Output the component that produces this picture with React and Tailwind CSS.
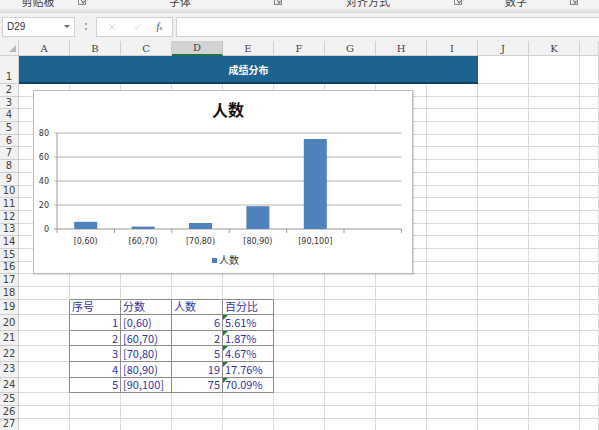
import React from 'react';
import { X, Check } from 'lucide-react';

const COLS = ['A', 'B', 'C', 'D', 'E', 'F', 'G', 'H', 'I', 'J', 'K', 'L'];
const data = [
    ['[0,60)', 6, '5.61%'],
    ['[60,70)', 2, '1.87%'],
    ['[70,80)', 5, '4.67%'],
    ['[80,90)', 19, '17.76%'],
    ['[90,100]', 75, '70.09%'],
];

const rowHeight = (r) => {
    if (r === 1) return 'h-[28px]';
    if (r >= 19 && r <= 24) return 'h-[15.6px]';
    return 'h-[12.7px]';
};

const Launcher = () => (
    <svg width="8" height="8" viewBox="0 0 8 8" className="mt-[-1px]">
        <rect x="0.5" y="0.5" width="7" height="7" fill="none" stroke="#8a8a8a" />
        <path d="M2 2 L6 6 M6 3.5 V6 H3.5" fill="none" stroke="#6a6a6a" />
    </svg>
);

const Chart = () => {
    const x0 = 23, step = 57.4, y0 = 138, k = 1.2;
    return (
        <div className="absolute left-[33px] top-[49px] w-[380px] h-[184px] bg-white border border-[#bcbcbc] shadow-[1px_1px_1px_rgba(0,0,0,0.12)]">
            <svg width="378" height="182" className="block">
                <text x="194" y="25" textAnchor="middle" fontSize="16" fontWeight="bold" fill="#111" fontFamily="'Noto Sans CJK SC', sans-serif">人数</text>
                {[0, 20, 40, 60, 80].map((v) => (
                    <g key={v}>
                        <line x1={x0 - 3} x2={x0 + step * 6} y1={y0 - v * k} y2={y0 - v * k} stroke={v === 0 ? '#9a9a9a' : '#b4b4b4'} strokeWidth="1.2" />
                        <text x={x0 - 8} y={y0 - v * k + 3} textAnchor="end" fontSize="8" fill="#333" fontFamily="'DejaVu Sans', sans-serif">{v}</text>
                    </g>
                ))}
                <line x1={x0} x2={x0} y1={y0 - 96} y2={y0} stroke="#9a9a9a" />
                {[0, 1, 2, 3, 4, 5, 6].map((i) => (
                    <line key={i} x1={x0 + step * i} x2={x0 + step * i} y1={y0} y2={y0 + 4} stroke="#9a9a9a" />
                ))}
                {data.map(([label, v], i) => {
                    const cx = x0 + step * (i + 0.5);
                    return (
                        <g key={label}>
                            <rect x={cx - 11.5} y={y0 - v * k} width="23" height={v * k} fill="#4f81bd" />
                            <text x={cx} y={y0 + 15} textAnchor="middle" fontSize="8" fill="#333" fontFamily="'DejaVu Sans', sans-serif">{label}</text>
                        </g>
                    );
                })}
                <rect x="178" y="167" width="5" height="5" fill="#4f81bd" />
                <text x="185" y="173" fontSize="10" fill="#333" fontFamily="'Noto Sans CJK SC', sans-serif">人数</text>
            </svg>
        </div>
    );
};

const cellContent = (r, c) => {
    if (r === 19) {
        const heads = { 1: '序号', 2: '分数', 3: '人数', 4: '百分比' };
        if (heads[c]) return <span className="pl-[2px]">{heads[c]}</span>;
    }
    if (r >= 20 && r <= 24) {
        const row = data[r - 20];
        if (c === 1) return <span className="ml-auto pr-[2px]">{r - 19}</span>;
        if (c === 2) return <span className="pl-[2px]">{row[0]}</span>;
        if (c === 3) return <span className="ml-auto pr-[2px]">{row[1]}</span>;
        if (c === 4) return (
            <>
                <span className="absolute left-0 top-0 w-0 h-0 border-t-[5px] border-r-[5px] border-t-[#1f7a33] border-r-transparent" />
                <span className="pl-[2px]">{row[2]}</span>
            </>
        );
    }
    return null;
};

const Cell = ({ r, c }) => {
    const inTable = r >= 19 && r <= 24 && c >= 1 && c <= 4;
    const rightDark = (r >= 19 && r <= 24 && c >= 0 && c <= 4);
    const bottomDark = (r >= 18 && r <= 24 && c >= 1 && c <= 4);
    return (
        <div
            className={`relative flex items-center shrink-0 ${c === 11 ? 'flex-1' : 'w-[51px]'} border-r border-b ${rightDark ? 'border-r-[#8c8c8c]' : 'border-r-[#dadada]'} ${bottomDark ? 'border-b-[#8c8c8c]' : 'border-b-[#dadada]'} ${inTable ? 'text-[#3434a6]' : ''} text-[11px] leading-none font-['Noto_Sans_CJK_SC',sans-serif]`}
        >
            {cellContent(r, c)}
        </div>
    );
};

const RowHead = ({ r }) => (
    <div className={`w-[19px] shrink-0 flex justify-center ${r === 1 ? 'items-end pb-[1px]' : 'items-center'} bg-[#f2f2f2] border-r border-b border-[#d0d0d0] text-[10px] leading-none text-[#444] font-['DejaVu_Sans',sans-serif]`}>
        {r}
    </div>
);

const App = () => {
    const rows = Array.from({ length: 28 }, (_, i) => i + 1);
    return (
        <div className="w-[599px] h-[430px] overflow-hidden bg-white flex flex-col font-['Liberation_Sans','Noto_Sans_CJK_SC',sans-serif]">
            {/* ribbon group labels, cut at top */}
            <div className="h-[9px] shrink-0 overflow-hidden bg-[#f3f3f3] flex text-[11px] leading-[11px] text-[#444] font-['Noto_Sans_CJK_SC',sans-serif]">
                {[['剪贴板', 'w-[88px]'], ['字体', 'w-[196px]'], ['对齐方式', 'w-[180px]'], ['数字', 'w-[116px]']].map(([t, w]) => (
                    <div key={t} className={`${w} flex items-start`}>
                        <span className="flex-1 text-center mt-[-4px]">{t}</span>
                        <span className="w-[12px] flex justify-center mt-[-2px]"><Launcher /></span>
                    </div>
                ))}
            </div>
            <div className="h-[4px] shrink-0 bg-[#e4e4e4] border-b border-[#d6d6d6]" />
            {/* formula bar */}
            <div className="h-[27px] shrink-0 bg-[#f1f1f1] flex items-center pl-[2px] gap-0">
                <div className="w-[73px] h-[20px] bg-white border border-[#d2d2d2] flex items-center pl-[4px] pr-[4px] text-[10px] text-[#333]">
                    <span className="flex-1">D29</span>
                    <span className="w-0 h-0 border-l-[3px] border-r-[3px] border-t-[3px] border-l-transparent border-r-transparent border-t-[#666]" />
                </div>
                <div className="w-[21px] flex flex-col items-center gap-[3px]">
                    <span className="w-[2px] h-[2px] bg-[#a8a8a8]" />
                    <span className="w-[2px] h-[2px] bg-[#a8a8a8]" />
                </div>
                <div className="w-[77px] h-[20px] bg-white border border-[#d2d2d2] flex items-center justify-around px-[2px] text-[#b4b4b4]">
                    <X size={10} strokeWidth={1.4} />
                    <Check size={10} strokeWidth={1.4} />
                    <span className="text-[10px] italic text-[#444] font-['Liberation_Serif',serif]">f<span className="text-[7px]">x</span></span>
                </div>
                <div className="flex-1 h-[20px] ml-[3px] bg-white border border-[#d2d2d2] border-r-0" />
            </div>
            <div className="h-[1px] shrink-0 bg-[#f1f1f1]" />
            {/* sheet */}
            <div className="relative flex-1">
                <div className="flex h-[15px]">
                    <div className="w-[19px] shrink-0 bg-[#f2f2f2] border-r border-b border-[#d0d0d0] relative">
                        <span className="absolute right-[3px] bottom-[3px] w-0 h-0 border-l-[6px] border-t-[6px] border-l-transparent border-t-transparent border-b-0 border-r-0 border-b-[#b5b5b5]" style={{ borderBottomWidth: 0 }} />
                        <svg width="7" height="7" className="absolute right-[2px] bottom-[3px]"><path d="M7 0 V7 H0 Z" fill="#b9b9b9" /></svg>
                    </div>
                    {COLS.map((col, i) => (
                        <div
                            key={col}
                            className={`${i === 11 ? 'flex-1' : 'w-[51px]'} shrink-0 flex items-center justify-center border-r text-[10px] text-[#444] font-['DejaVu_Serif',serif] ${col === 'D' ? 'bg-[#d3d3d3] border-b-2 border-b-[#217346] border-r-[#c0c0c0]' : 'bg-[#f2f2f2] border-b border-[#d0d0d0]'}`}
                        >
                            {col !== 'L' && col}
                        </div>
                    ))}
                </div>
                {rows.map((r) => (
                    <div key={r} className={`flex ${rowHeight(r)}`}>
                        <RowHead r={r} />
                        {r === 1 ? (
                            <>
                                <div className="w-[459px] shrink-0 bg-[#1c6390] border-b-2 border-b-[#123f5e] flex items-center justify-center text-white text-[10px] font-bold font-['Noto_Sans_CJK_SC',sans-serif]">
                                    成绩分布
                                </div>
                                {[9, 10, 11].map((c) => <Cell key={c} r={r} c={c} />)}
                            </>
                        ) : (
                            COLS.map((_, c) => <Cell key={c} r={r} c={c} />)
                        )}
                    </div>
                ))}
                <Chart />
            </div>
        </div>
    );
};

export default App;
